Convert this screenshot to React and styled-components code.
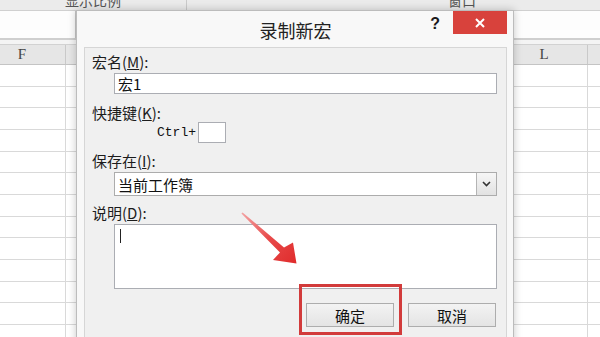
import React from "react";
import styled, { createGlobalStyle } from "styled-components";

const Global = createGlobalStyle`
  html, body { margin: 0; padding: 0; }
  body {
    width: 600px; height: 337px; overflow: hidden; background: #fff;
    font-family: "Noto Sans CJK SC", "Noto Sans", sans-serif;
  }
  #root { width: 600px; height: 337px; }
`;

const Screen = styled.div`
  position: relative;
  width: 600px;
  height: 337px;
  overflow: hidden;
  background: #fff;
  display: flex;
  flex-direction: column;
`;

/* ---------- Excel background ---------- */
const Ribbon = styled.div`
  flex: none;
  height: 10px;
  display: flex;
  background: #ebebeb;
  border-bottom: 1px solid #d0d0d0;
  overflow: hidden;
`;
const RibbonGroup = styled.div`
  flex: none;
  width: ${(p) => p.$w}px;
  border-right: 1px solid #cacaca;
  display: flex;
  justify-content: center;
`;
const GroupLabel = styled.span`
  font-size: 14px;
  line-height: 16px;
  margin-top: -8px;
  color: #555;
  white-space: nowrap;
`;
const FormulaBar = styled.div`
  flex: none;
  height: 29px;
  box-sizing: border-box;
  display: flex;
  background: #fdfdfd;
  border-bottom: 2px solid #cfcfcf;
`;
const NameBox = styled.div`
  width: 76px;
  box-sizing: border-box;
  border-right: 1px solid #c6c6c6;
`;
const Gap = styled.div`
  flex: none;
  height: 4px;
  background: #f4f4f4;
`;
const Sheet = styled.div`
  margin-left: -21px;
  display: flex;
  flex-direction: column;
`;
const HeaderRow = styled.div`
  display: grid;
  grid-template-columns: repeat(8, 87px);
  height: 21px;
  box-sizing: border-box;
  background: #e6e6e6;
  border-top: 1px solid #d2d2d2;
  border-bottom: 1px solid #c4c4c4;
`;
const HeaderCell = styled.div`
  border-right: 1px solid #c9c9c9;
  display: flex;
  align-items: center;
  justify-content: center;
  font-family: "Liberation Serif", serif;
  font-size: 15px;
  color: #444;
`;
const Grid = styled.div`
  display: grid;
  grid-template-columns: repeat(8, 87px);
  grid-auto-rows: 21.67px;
`;
const Cell = styled.div`
  box-sizing: border-box;
  border-right: 1px solid #d9d9d9;
  border-bottom: 1px solid #d9d9d9;
`;

/* ---------- Dialog ---------- */
const Dialog = styled.div`
  position: absolute;
  left: 76px;
  top: 10px;
  width: 438px;
  height: 345px;
  box-sizing: border-box;
  border: 1px solid #bcbcbc;
  background: #f8f8f8;
  box-shadow: 0 0 8px rgba(0, 0, 0, 0.22);
  display: flex;
  flex-direction: column;
  padding: 0 6px 0 7px;
`;
const TitleBar = styled.div`
  flex: none;
  height: 36px;
  display: grid;
  grid-template-columns: 1fr auto 1fr;
`;
const Title = styled.div`
  grid-column: 2;
  padding-top: 7px;
  font-size: 18px;
  line-height: 24px;
  color: #222;
`;
const Controls = styled.div`
  grid-column: 3;
  display: flex;
  justify-content: flex-end;
  align-items: flex-start;
`;
const Help = styled.span`
  margin-top: 3px;
  margin-right: 13px;
  font-family: "Liberation Sans", sans-serif;
  font-weight: bold;
  font-size: 16px;
  line-height: 20px;
  color: #1a1a1a;
`;
const CloseButton = styled.div`
  width: 54px;
  height: 23px;
  background: #d8423c;
  display: flex;
  align-items: center;
  justify-content: center;
`;
const Client = styled.div`
  flex: 1;
  box-sizing: border-box;
  border: 1px solid #d6d6d6;
  background: #f0f0f0;
  display: flex;
  flex-direction: column;
  padding: 0 9px 0 7px;
`;
const Label = styled.div`
  font-size: 15px;
  line-height: 18px;
  margin-top: ${(p) => p.$mt}px;
  color: #1c1c1c;
  u { text-decoration-thickness: 1px; text-underline-offset: 1px; }
`;
const TextBox = styled.div`
  margin-top: ${(p) => p.$mt}px;
  margin-left: 22px;
  height: ${(p) => p.$h}px;
  box-sizing: border-box;
  border: 1px solid #abadb3;
  background: #fff;
  display: flex;
  align-items: ${(p) => (p.$top ? "flex-start" : "center")};
  padding-left: 3px;
  font-size: 15px;
  color: #111;
`;
const ShortcutRow = styled.div`
  height: 21px;
  display: flex;
  align-items: center;
  margin-left: 65px;
  gap: 2px;
`;
const CtrlText = styled.span`
  font-family: "Liberation Mono", monospace;
  font-size: 13px;
  color: #111;
`;
const KeyBox = styled.div`
  width: 28px;
  height: 21px;
  box-sizing: border-box;
  border: 1px solid #abadb3;
  background: #fff;
`;
const SelectBox = styled.div`
  margin-top: 2px;
  margin-left: 22px;
  height: 24px;
  box-sizing: border-box;
  border: 1px solid #acacac;
  background: #fff;
  display: flex;
  align-items: center;
  font-size: 15px;
  color: #111;
`;
const SelectValue = styled.span`
  flex: 1;
  padding-left: 3px;
`;
const DropButton = styled.div`
  width: 20px;
  align-self: stretch;
  box-sizing: border-box;
  border-left: 1px solid #b4b4b4;
  background: linear-gradient(#f6f6f6, #e2e2e2);
  display: flex;
  align-items: center;
  justify-content: center;
`;
const Caret = styled.span`
  margin-top: 4px;
  margin-left: 2px;
  width: 1px;
  height: 14px;
  background: #222;
`;
const ButtonRow = styled.div`
  margin-top: 14px;
  display: flex;
  justify-content: flex-end;
  gap: 14px;
  padding-right: 1px;
`;
const Button = styled.div`
  width: 88px;
  height: 24px;
  box-sizing: border-box;
  border: 1px solid #adadad;
  background: linear-gradient(#f3f3f3, #e4e4e4);
  display: flex;
  align-items: center;
  justify-content: center;
  font-size: 15px;
  color: #111;
`;

/* ---------- Annotations ---------- */
const Highlight = styled.div`
  position: absolute;
  left: 299px;
  top: 284px;
  width: 103px;
  height: 51px;
  box-sizing: border-box;
  border: 3px solid #d23b3b;
`;
const Overlay = styled.svg`
  position: absolute;
  left: 0;
  top: 0;
  pointer-events: none;
`;

const cols = ["F", "G", "H", "I", "J", "K", "L", ""];

export default function App() {
  return (
    <>
      <Global />
      <Screen>
        <Ribbon>
          <RibbonGroup $w={186}>
            <GroupLabel>显示比例</GroupLabel>
          </RibbonGroup>
          <RibbonGroup $w={550}>
            <GroupLabel>窗口</GroupLabel>
          </RibbonGroup>
        </Ribbon>
        <FormulaBar>
          <NameBox />
        </FormulaBar>
        <Gap />
        <Sheet>
          <HeaderRow>
            {cols.map((c, i) => (
              <HeaderCell key={i}>{c}</HeaderCell>
            ))}
          </HeaderRow>
          <Grid>
            {Array.from({ length: 8 * 13 }).map((_, i) => (
              <Cell key={i} />
            ))}
          </Grid>
        </Sheet>

        <Dialog>
          <TitleBar>
            <Title>录制新宏</Title>
            <Controls>
              <Help>?</Help>
              <CloseButton>
                <svg width="10" height="10" viewBox="0 0 10 10">
                  <path d="M1 1 L9 9 M9 1 L1 9" stroke="#fff" strokeWidth="2" />
                </svg>
              </CloseButton>
            </Controls>
          </TitleBar>
          <Client>
            <Label $mt={5}>
              宏名(<u>M</u>):
            </Label>
            <TextBox $mt={2} $h={21}>宏1</TextBox>
            <Label $mt={10}>
              快捷键(<u>K</u>):
            </Label>
            <ShortcutRow>
              <CtrlText>Ctrl+</CtrlText>
              <KeyBox />
            </ShortcutRow>
            <Label $mt={9}>
              保存在(<u>I</u>):
            </Label>
            <SelectBox>
              <SelectValue>当前工作簿</SelectValue>
              <DropButton>
                <svg width="9" height="6" viewBox="0 0 9 6">
                  <path d="M1 1 L4.5 4.5 L8 1" fill="none" stroke="#333" strokeWidth="1.6" />
                </svg>
              </DropButton>
            </SelectBox>
            <Label $mt={8}>
              说明(<u>D</u>):
            </Label>
            <TextBox $mt={2} $h={65} $top>
              <Caret />
            </TextBox>
            <ButtonRow>
              <Button>确定</Button>
              <Button>取消</Button>
            </ButtonRow>
          </Client>
        </Dialog>

        <Highlight />
        <Overlay width="600" height="337" viewBox="0 0 600 337">
          <defs>
            <linearGradient id="arrowGrad" x1="242" y1="213" x2="296" y2="263" gradientUnits="userSpaceOnUse">
              <stop offset="0" stopColor="#f3a3a3" />
              <stop offset="0.5" stopColor="#e84a4a" />
              <stop offset="1" stopColor="#e02c2c" />
            </linearGradient>
          </defs>
          <polygon
            points="242.6,212.4 284,247.6 293,242.5 296.5,263.5 273,260 280,252.4 241.4,213.6"
            fill="url(#arrowGrad)"
          />
        </Overlay>
      </Screen>
    </>
  );
}
